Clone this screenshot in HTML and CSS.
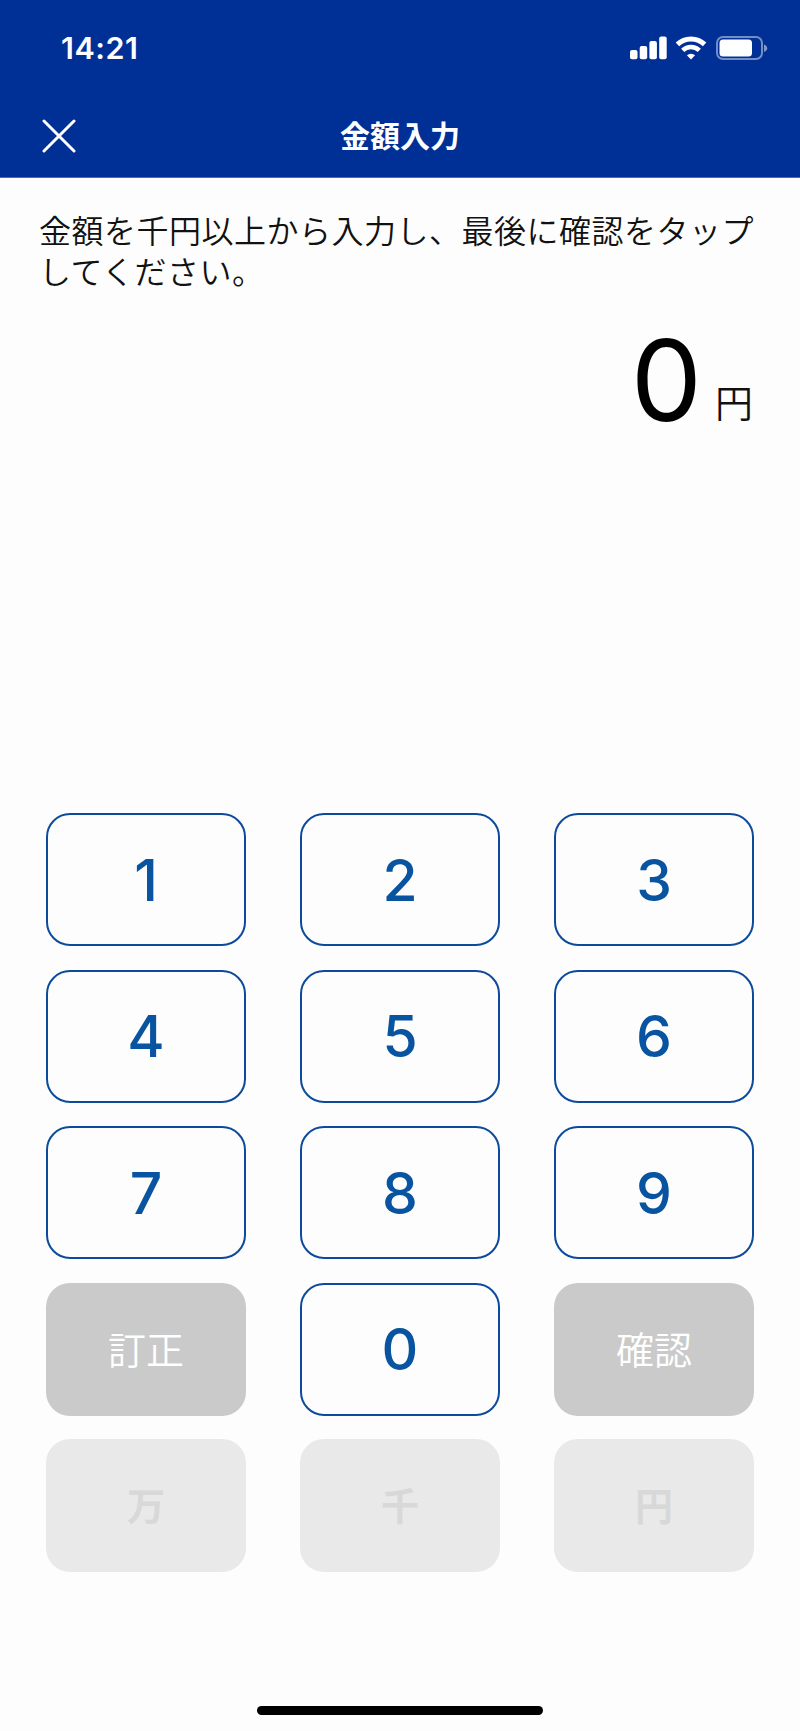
FILE: index.html
```html
<!DOCTYPE html>
<html lang="ja">
<head>
  <meta charset="UTF-8" />
  <meta name="viewport" content="width=device-width, initial-scale=1.0" />
  <title>金額入力</title>
  <link rel="stylesheet" href="styles.css">
</head>
<body>
  <div class="screen">
    <header class="header">
      <div class="status-bar">
        <span class="time">14:21</span>
        <div class="status-icons">
          <svg class="signal" width="37" height="24" viewBox="0 0 37 24" fill="#fff">
            <rect x="0" y="14" width="7.5" height="9.3" rx="2" />
            <rect x="9.7" y="10" width="7.5" height="13.3" rx="2" />
            <rect x="19.4" y="5" width="7.5" height="18.3" rx="2" />
            <rect x="29.2" y="0.5" width="7.5" height="22.8" rx="2" />
          </svg>
          <svg class="wifi" width="32" height="24" viewBox="0 0 32 24" fill="none" stroke="#fff">
            <path d="M2.4 8.4a19.6 19.6 0 0 1 27.2 0" stroke-width="5" />
            <path d="M7.7 14.3a12 12 0 0 1 16.6 0" stroke-width="4.6" />
            <path d="M16 23.4l-4.1-4.1a6 6 0 0 1 8.2 0z" fill="#fff" stroke="none" />
          </svg>
          <svg class="battery" width="52" height="24" viewBox="0 0 52 24">
            <rect x="1" y="1" width="45" height="22" rx="6" fill="none" stroke="#fff" stroke-opacity="0.45" stroke-width="2" />
            <rect x="3.5" y="3.5" width="32.5" height="17" rx="3.5" fill="#fff" />
            <path d="M48 8.5c4.3 1.5 4.3 6 0 7.5z" fill="#fff" fill-opacity="0.5" />
          </svg>
        </div>
      </div>
      <div class="nav-bar">
        <button class="close" type="button" aria-label="閉じる">
          <svg width="34" height="34" viewBox="0 0 34 34" stroke="#fff" stroke-width="3" stroke-linecap="round">
            <path d="M2 2l30 30M32 2L2 32" />
          </svg>
        </button>
        <h1>金額入力</h1>
      </div>
    </header>

    <main class="content">
      <p class="message">金額を千円以上から入力し、最後に確認をタップしてください。</p>
      <div class="amount">
        <span class="amount-value">0</span>
        <span class="amount-unit">円</span>
      </div>
      <div class="keypad">
        <button class="key" type="button">1</button>
        <button class="key" type="button">2</button>
        <button class="key" type="button">3</button>
        <button class="key" type="button">4</button>
        <button class="key" type="button">5</button>
        <button class="key" type="button">6</button>
        <button class="key" type="button">7</button>
        <button class="key" type="button">8</button>
        <button class="key" type="button">9</button>
        <button class="key action" type="button">訂正</button>
        <button class="key" type="button">0</button>
        <button class="key action" type="button">確認</button>
        <button class="key unit" type="button">万</button>
        <button class="key unit" type="button">千</button>
        <button class="key unit" type="button">円</button>
      </div>
    </main>

    <div class="home-indicator"></div>
  </div>
</body>
</html>
```

FILE: styles.css
```css
* {
  margin: 0;
  padding: 0;
  box-sizing: border-box;
}

body {
  background: #fdfdfd;
  color: #000;
  font-family: Inter, 'Noto Sans CJK JP', sans-serif;
}

.screen {
  width: 800px;
  height: 1731px;
  display: flex;
  flex-direction: column;
  overflow: hidden;
}

.header {
  height: 178px;
  background: #003096;
  border-bottom: 1px solid #5468ad;
  color: #fff;
}

.status-bar {
  height: 96px;
  padding: 0 32px 0 61px;
  display: flex;
  align-items: center;
  justify-content: space-between;
}

.time {
  font-size: 30.5px;
  font-weight: 600;
  line-height: 36px;
  letter-spacing: 0.5px;
}

.status-icons {
  display: flex;
  align-items: center;
}

.wifi {
  margin: 0 9px 0 8px;
}

.nav-bar {
  height: 79px;
  padding: 0 42px;
  display: grid;
  grid-template-columns: 34px 1fr 34px;
  align-items: center;
}

.close {
  height: 34px;
  border: none;
  background: none;
  cursor: pointer;
}

.close svg {
  display: block;
}

h1 {
  font-size: 30px;
  font-weight: 700;
  line-height: 40px;
  text-align: center;
}

.content {
  flex: 1;
  padding: 33px 46px 0;
}

.message {
  margin: 0 -11px 0 -7px;
  color: #111;
  font-size: 32px;
  font-weight: 350;
  line-height: 41px;
  letter-spacing: 0.5px;
}

.amount {
  height: 130px;
  margin-top: 22px;
  display: flex;
  justify-content: flex-end;
  align-items: flex-end;
}

.amount-value {
  font-size: 113px;
  line-height: 130px;
}

.amount-unit {
  margin: 0 1px 20px 13px;
  color: #111;
  font-size: 38px;
  font-weight: 350;
  line-height: 44px;
}

.keypad {
  margin-top: 368px;
  display: grid;
  grid-template-columns: repeat(3, 200px);
  grid-auto-rows: 133px;
  justify-content: space-between;
  row-gap: 23.5px;
}

.key {
  padding-top: 1px;
  border: 2px solid #0c4a9c;
  border-radius: 24px;
  background: #fdfdfd;
  color: #0854a0;
  font-family: inherit;
  font-size: 57px;
  font-weight: 500;
  line-height: 1;
  cursor: pointer;
}

.action {
  border: none;
  background: #cacaca;
  color: #fff;
  font-size: 38px;
  font-weight: 350;
}

.unit {
  border: none;
  background: #e9e9e9;
  color: #d8d8d8;
  font-size: 38px;
  font-weight: 700;
}

.home-indicator {
  width: 286px;
  height: 9px;
  margin: 0 auto 16px;
  border-radius: 5px;
  background: #000;
}
```
